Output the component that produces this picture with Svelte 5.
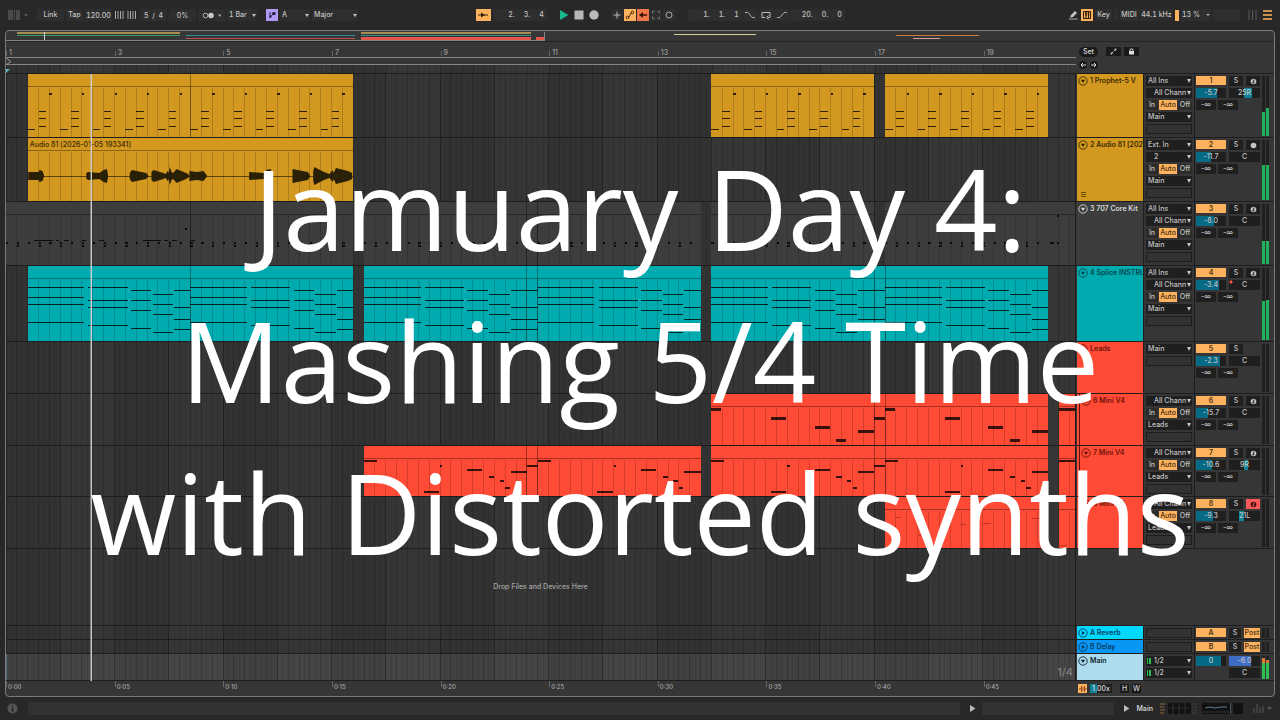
<script lang="ts">
  interface Note { x: number; w: number; y: number; h?: number }
  interface Clip { start: number; len: number; splits?: number[]; label?: string; notes: Note[] }
  interface Track {
    id: string
    name: string
    color: string
    ink: string
    height: number
    grouped?: boolean
    input?: string
    channel?: string
    monitor?: boolean
    output: string
    vol: string
    volFill: number
    pan: string
    panFrom?: number
    panTo?: number
    arm?: 'midi' | 'audio' | 'on'
    meter: number[]
    hot?: boolean
    clips: Clip[]
  }

  // Horizontal unit everywhere in the lanes: one beat
  const VIEW = 98.5
  const PER_BAR = 5

  const bands = Array.from({ length: 10 }, (_, i) => i * 10 + 5)
  const beats = Array.from({ length: 99 }, (_, i) => i)
  const bars = Array.from({ length: 10 }, (_, i) => i * 2 + 1)
  const seconds = Array.from({ length: 10 }, (_, i) => i * 5)

  function stabs(count: number): Note[] {
    const out: Note[] = []
    for (let i = 0; i < count; i++) {
      const x = i * 3
      out.push({ x, w: 0.7, y: 55, h: 1 })
      for (const y of [37, 44, 52]) out.push({ x: x + 1, w: 0.7, y, h: 1 })
      out.push({ x: x + 2, w: 0.22, y: 19, h: 2 })
    }
    return out
  }

  const chordShapes = [
    { x: 0, w: 5.2, ys: [21, 31, 38, 56] },
    { x: 5.6, w: 3.6, ys: [21, 34, 41, 59] },
    { x: 9.5, w: 1.9, ys: [24, 34, 44, 62] },
    { x: 11.5, w: 1.9, ys: [28, 38, 48, 66] },
    { x: 13.5, w: 1.5, ys: [24, 41, 53, 63] },
  ]
  function chords(offset: number, tail = 1.5): Note[] {
    return chordShapes.flatMap((c) =>
      c.ys.map((y) => ({ x: c.x + offset, w: c.x === 13.5 ? tail : c.w, y, h: 1 })),
    )
  }

  const shift = (notes: Note[], by: number) => notes.map((n) => ({ ...n, x: n.x + by }))

  const bass: Note[] = [
    { x: 0, w: 0.9, y: 14, h: 3 },
    { x: 5.5, w: 1.4, y: 23, h: 3 },
    { x: 9.5, w: 1.4, y: 32, h: 3 },
    { x: 11.5, w: 0.9, y: 45, h: 3 },
    { x: 13.5, w: 1.5, y: 36, h: 3 },
  ]
  const lead: Note[] = [
    { x: 0, w: 1.2, y: 14 },
    { x: 5.5, w: 1.4, y: 45 },
    { x: 7, w: 0.2, y: 19 },
    { x: 9.5, w: 1.4, y: 23 },
    { x: 11.5, w: 0.5, y: 30 },
    { x: 12.5, w: 0.4, y: 34 },
    { x: 13, w: 0.4, y: 41 },
    { x: 13.5, w: 1.5, y: 25 },
  ]
  const fuzz: Note[] = [
    { x: 1, w: 0.5, y: 20, h: 1 }, { x: 3, w: 0.4, y: 38, h: 1 }, { x: 6.9, w: 0.6, y: 27, h: 1 },
    { x: 9, w: 0.8, y: 26, h: 1 }, { x: 11.5, w: 0.3, y: 36, h: 1 }, { x: 13.5, w: 0.7, y: 21, h: 1 },
  ]

  function drums(count: number, busy = false): Note[] {
    const out: Note[] = []
    for (let i = 0; i < count; i++) {
      out.push({ x: i, w: 0.2, y: 40, h: 2 })
      if (i % 2 === 1) out.push({ x: i, w: 0.2, y: 43, h: 2 })
    }
    if (busy) {
      for (const s of [0, 10]) {
        out.push({ x: s + 0.6, w: 1.7, y: 38, h: 1 }, { x: s + 2.6, w: 0.3, y: 38, h: 1 })
        out.push({ x: s + 3.3, w: 0.5, y: 38, h: 1 }, { x: s + 5, w: 0.4, y: 38, h: 1 })
      }
      out.push({ x: 6.6, w: 0.4, y: 38, h: 1 }, { x: 14.5, w: 0.2, y: 26, h: 2 })
    }
    return out
  }

  const padClip = (start: number): Clip => ({
    start, len: 31, splits: [15, 16], notes: [...chords(0, 2.5), ...chords(16)],
  })
  const leadClip = (start: number): Clip => ({
    start, len: 31, splits: [15, 16], notes: [...lead, { x: 15, w: 1, y: 19 }, ...shift(lead, 16)],
  })

  const amber = '#d29820'
  const coral = '#ff4a36'
  const teal = '#00abb0'

  const tracks: Track[] = [
    { id: '1', name: '1 Prophet-5 V', color: amber, ink: '#3d2a04', height: 64, input: 'All Ins', channel: 'All Channels',
      monitor: true, output: 'Main', vol: '-5.7', volFill: 70, pan: '25R', panFrom: 50, panTo: 74, arm: 'midi', meter: [40, 46],
      clips: [
        { start: 2, len: 30, splits: [15], notes: stabs(10) },
        { start: 65, len: 15, notes: stabs(5) },
        { start: 81, len: 15, notes: stabs(5) },
      ] },
    { id: '2', name: '2 Audio 81 [2026-01-05]', color: amber, ink: '#3d2a04', height: 64, input: 'Ext. In', channel: '2',
      monitor: true, output: 'Main', vol: '-11.7', volFill: 50, pan: 'C', arm: 'audio', meter: [58, 58],
      clips: [{ start: 2, len: 30, label: 'Audio 81 [2026-01-05 193341]', notes: [] }] },
    { id: '3', name: '3 707 Core Kit', color: '#3d3d3d', ink: '#d8d8d8', height: 64, input: 'All Ins', channel: 'All Channels',
      monitor: true, output: 'Main', vol: '-8.0', volFill: 60, pan: 'C', arm: 'midi', meter: [38, 38],
      clips: [
        { start: 0, len: 2, notes: drums(2) },
        { start: 2, len: 30, splits: [15], notes: drums(30, true) },
        { start: 33, len: 31, splits: [15, 16], notes: drums(31) },
        { start: 65, len: 15, notes: drums(15) },
        { start: 81, len: 15, notes: drums(15) },
        { start: 96, len: 3, notes: [{ x: 0.8, w: 0.2, y: 13, h: 2 }, { x: 0.2, w: 0.4, y: 40, h: 2 }, { x: 0.8, w: 0.2, y: 40, h: 2 }] },
      ] },
    { id: '4', name: '4 Splice INSTRUMENT', color: teal, ink: '#02474a', height: 76, input: 'All Ins', channel: 'All Channels',
      monitor: true, output: 'Main', vol: '-3.4', volFill: 76, pan: 'C', arm: 'midi', meter: [54, 56], hot: true,
      clips: [
        { start: 2, len: 30, splits: [15], notes: [...chords(0), ...chords(15)] },
        padClip(33),
        padClip(65),
      ] },
    { id: '5', name: 'Leads', color: coral, ink: '#6e130a', height: 52, output: 'Main', vol: '-2.3', volFill: 79, pan: 'C',
      meter: [0, 0], clips: [] },
    { id: '6', name: '6 Mini V4', color: coral, ink: '#6e130a', height: 52, grouped: true, channel: 'All Channels', monitor: true,
      output: 'Leads', vol: '-15.7', volFill: 40, pan: 'C', arm: 'midi', meter: [0, 0],
      clips: [
        { start: 65, len: 31, splits: [15, 16], notes: [...bass, { x: 15, w: 1, y: 23, h: 3 }, ...shift(bass, 16)] },
        { start: 97, len: 2, notes: [{ x: 0, w: 1.5, y: 14, h: 3 }] },
      ] },
    { id: '7', name: '7 Mini V4', color: coral, ink: '#6e130a', height: 51, grouped: true, channel: 'All Channels', monitor: true,
      output: 'Leads', vol: '-10.6', volFill: 53, pan: '9R', panFrom: 50, panTo: 60, arm: 'midi', meter: [0, 0],
      clips: [leadClip(33), leadClip(65), { start: 97, len: 2, notes: [{ x: 0, w: 1.5, y: 14 }] }] },
    { id: '8', name: '8 Mini V4', color: coral, ink: '#6e130a', height: 52, grouped: true, channel: 'All Channels', monitor: true,
      output: 'Leads', vol: '-9.3', volFill: 57, pan: '21L', panFrom: 32, panTo: 50, arm: 'on', meter: [0, 0],
      clips: [
        { start: 81, len: 15, notes: fuzz },
        { start: 97, len: 2, notes: [{ x: 0, w: 0.8, y: 48, h: 1 }] },
      ] },
  ]

  const returns = [
    { id: 'A', name: 'A Reverb', color: '#00d8ff' },
    { id: 'B', name: 'B Delay', color: '#0a96f5' },
  ]

  // Waveform bursts: [beat, half height in px]
  const bursts = [
    [[2.05, 4], [3, 4], [3.1, 6], [3.35, 5], [3.5, 1]],
    [[7.4, 3], [7.6, 4], [8.6, 3], [9, 6], [9.3, 7], [9.4, 1]],
    [[11.4, 3], [11.6, 6], [12.9, 3], [13.1, 1]],
    [[13.4, 4], [13.6, 6], [14.5, 3], [14.7, 2], [14.9, 5], [15, 3], [15.1, 9], [15.3, 3], [15.5, 4], [15.7, 7], [16.6, 3], [16.9, 1]],
    [[16.9, 5], [17.6, 4], [18.2, 5], [18.4, 2], [18.5, 1]],
    [[22.4, 4], [23.7, 3], [24, 6], [24.4, 7], [24.5, 1]],
    [[26.4, 7], [27.8, 4], [28, 1]],
    [[28.3, 4], [28.4, 9], [29.3, 4], [29.8, 2], [30.1, 6], [30.2, 3], [30.4, 8], [31.5, 5], [31.9, 3]],
  ]
  function burstPath(b: number[][]) {
    const top = b.map(([x, a]) => `${x} ${38 - a}`)
    const bottom = [...b].reverse().map(([x, a]) => `${x} ${38 + a}`)
    return `M${[...top, ...bottom].join('L')}Z`
  }

  const overview = [
    { x: 11, w: 163, y: 1, h: 2, c: '#a38d4f' }, { x: 11, w: 163, y: 4, h: 1, c: '#3e9a6a' },
    { x: 180, w: 169, y: 4, h: 1, c: '#2f8f92' }, { x: 180, w: 169, y: 7, h: 1, c: '#c24f45' },
    { x: 355, w: 170, y: 1, h: 2, c: '#a38d4f' }, { x: 355, w: 170, y: 4, h: 1, c: '#2f8f92' },
    { x: 355, w: 170, y: 6, h: 3, c: '#e2574a' }, { x: 530, w: 9, y: 6, h: 3, c: '#e2574a' },
    { x: 668, w: 82, y: 3, h: 1, c: '#d8cf98' },
    { x: 890, w: 83, y: 4, h: 1, c: '#c87d3c' }, { x: 907, w: 27, y: 7, h: 1, c: '#d6a197' },
  ]

  let playing = $state(true)
  let muted = $state<Record<string, boolean>>({})
</script>

{#snippet lane(height: number, clips: Clip[], color: string, wave: boolean)}
  <svg class="lane" viewBox="0 0 {VIEW} {height}" preserveAspectRatio="none" shape-rendering="crispEdges" aria-hidden="true">
    {#each bands as b}
      <rect x={b} y="0" width={PER_BAR} {height} fill="#fff" opacity=".022" />
    {/each}
    {#each beats as b}
      <line class="beat" class:bar={b % PER_BAR === 0} x1={b} x2={b} y1="0" y2={height} />
      <line class="half" x1={b + 0.5} x2={b + 0.5} y1="0" y2={height} />
    {/each}
    {#each clips as clip}
      <rect x={clip.start} y="0" width={clip.len} {height} fill={color} />
      {#each beats.slice(1, clip.len) as b}
        <line class="clip-beat" x1={clip.start + b} x2={clip.start + b} y1="14" y2={height} />
      {/each}
      <line class="clip-head" x1={clip.start} x2={clip.start + clip.len} y1="12" y2="12" />
      {#each clip.splits ?? [] as s}
        <line class="clip-head" x1={clip.start + s} x2={clip.start + s} y1="0" y2={height} />
      {/each}
      {#each clip.notes as n}
        <rect x={clip.start + n.x} y={n.y} width={n.w} height={n.h ?? 2} fill="#000" opacity={n.h === 1 && color === coral ? 0.25 : 0.78} />
      {/each}
    {/each}
    {#if wave}
      <line class="wave-axis" x1="2" x2="32" y1="38" y2="38" />
      {#each bursts as b}
        <path d={burstPath(b)} fill="#2a2008" shape-rendering="auto" />
      {/each}
    {/if}
  </svg>
{/snippet}

{#snippet fold(open: boolean)}
  <svg class="fold" viewBox="0 0 10 10" aria-hidden="true">
    <circle cx="5" cy="5" r="4.2" fill="none" stroke="currentColor" stroke-width=".9" />
    <path d={open ? 'M2.8 3.8h4.4L5 7Z' : 'M3.8 2.8v4.4L7 5Z'} fill="currentColor" />
  </svg>
{/snippet}

{#snippet pick(label: string, value: string, indent: boolean)}
  <span class="pick">
    <select aria-label={label} class:indent><option>{value}</option></select>
  </span>
{/snippet}

<div class="app">
  <header class="transport">
    <div class="group">
      <button type="button" class="ghost" aria-label="Browser">
        <svg width="20" height="10" viewBox="0 0 20 10"><path d="M0 0h5v10H0zM6 0h1v10H6zM8 0h4v10H8z" fill="#4a4a4a" /><path d="M16 4h4l-2 3z" fill="#555" /></svg>
      </button>
      <button type="button" class="cell w27">Link</button>
      <button type="button" class="cell w17">Tap</button>
      <input class="cell w27" aria-label="Tempo" value="120.00" />
      <svg width="24" height="8" viewBox="0 0 24 8" aria-hidden="true"><path d="M1.500 0v8M4 0v8M6.500 0v8M9 0v8M14 0v8M16.500 0v8M19 0v8M21.500 0v8" stroke="#aaa" /></svg>
      <input class="cell w27" aria-label="Time signature" value="5  /  4" />
      <input class="cell w27" aria-label="Groove amount" value="0%" />
      <button type="button" class="cell w27" aria-label="Metronome">
        <svg width="20" height="7" viewBox="0 0 20 7"><circle cx="3.500" cy="3.500" r="2.300" fill="none" stroke="#b5b5b5" /><circle cx="9" cy="3.500" r="2.800" fill="#c8c8c8" /><path d="M16 2.500h3.500L17.750 5z" fill="#aaa" /></svg>
      </button>
      <span class="pick flat w30"><select aria-label="Quantization"><option>1 Bar</option></select></span>
      <button type="button" class="cell scale" aria-label="Scale mode">
        <svg width="10" height="10" viewBox="0 0 10 10"><path d="M3 2v5M3.500 6.500l2-1.500V3.500" stroke="#2b2350" fill="none" /><path d="M5.500 2h3v3h-3z" fill="#2b2350" /><circle cx="3.300" cy="6.800" r="1.200" fill="#2b2350" /></svg>
      </button>
      <span class="pick flat w30"><select aria-label="Root note"><option>A</option></select></span>
      <span class="pick flat w46"><select aria-label="Scale name"><option>Major</option></select></span>
    </div>

    <div class="group">
      <button type="button" class="cell lit follow" aria-label="Follow">
        <svg width="12" height="8" viewBox="0 0 12 8"><path d="M1 4h10" stroke="#33210a" /><path d="M4 1.500 8 4 4 6.500Z" fill="#33210a" /></svg>
      </button>
      <output class="cell pos"><span>2.</span><span>3.</span><span>4</span></output>
      <div class="play-set">
        <button type="button" class="ghost" aria-label="Play" onclick={() => (playing = !playing)}>
          <svg width="10" height="12" viewBox="0 0 10 12"><path d="M1 1v10l8.500-5z" fill={playing ? '#17b88c' : '#b5b5b5'} /></svg>
        </button>
        <button type="button" class="ghost" aria-label="Stop" onclick={() => (playing = false)}>
          <svg width="10" height="10" viewBox="0 0 10 10"><path d="M.5.5h9v9h-9z" fill="#b8b8b8" /></svg>
        </button>
        <button type="button" class="ghost" aria-label="Record">
          <svg width="10" height="10" viewBox="0 0 10 10"><circle cx="5" cy="5" r="4.700" fill="#bcbcbc" /></svg>
        </button>
      </div>
      <div class="tight">
        <button type="button" class="cell w12" aria-label="Overdub"><svg width="8" height="8" viewBox="0 0 8 8"><path d="M4 .5v7M.5 4h7" stroke="#bbb" /></svg></button>
        <button type="button" class="cell lit w12" aria-label="Automation arm"><svg width="10" height="10" viewBox="0 0 10 10"><path d="M3 7q2 0 2-2t2-2" stroke="#4a2c08" fill="none" /><g fill="none" stroke="#4a2c08"><circle cx="2.500" cy="7.500" r="1.300" /><circle cx="7.500" cy="2.500" r="1.300" /></g></svg></button>
        <button type="button" class="cell hot w12" aria-label="Re-enable automation"><svg width="10" height="8" viewBox="0 0 10 8"><path d="M4 4h5" stroke="#3b1306" stroke-width="1.500" /><path d="M5 1 1 4l4 3z" fill="#3b1306" /></svg></button>
        <button type="button" class="cell w12" aria-label="Capture"><svg width="8" height="8" viewBox="0 0 8 8"><path d="M.5 2.500v-2h2M5.500.5h2v2M7.500 5.500v2h-2M2.500 7.500h-2v-2" stroke="#777" fill="none" /></svg></button>
        <button type="button" class="cell w12" aria-label="Session record"><svg width="8" height="8" viewBox="0 0 8 8"><circle cx="4" cy="4" r="3" stroke="#aaa" fill="none" /></svg></button>
      </div>
      <div class="tight loop">
        <output class="cell pos"><span>1.</span><span>1.</span><span>1</span></output>
        <button type="button" class="cell w15" aria-label="Punch in"><svg width="10" height="8" viewBox="0 0 10 8"><path d="M0 1.500h3l4 5h3" stroke="#aaa" fill="none" /></svg></button>
        <button type="button" class="cell w15" aria-label="Loop"><svg width="10" height="9" viewBox="0 0 10 9"><path d="M4 6.500H1v-5h8v5H7M7.500 4.500 5.500 6.500l2 2" stroke="#bbb" fill="none" /></svg></button>
        <button type="button" class="cell w15" aria-label="Punch out"><svg width="10" height="8" viewBox="0 0 10 8"><path d="M0 6.500h3l4-5h3" stroke="#aaa" fill="none" /></svg></button>
        <output class="cell pos"><span>20.</span><span>0.</span><span>0</span></output>
      </div>
    </div>

    <div class="group right">
      <button type="button" class="ghost" aria-label="Draw mode"><svg width="9" height="10" viewBox="0 0 9 10"><path d="M1 7.500 2 5l4-4 2 2-4 4z" fill="#c4c4c4" /><path d="M0 9h8.500" stroke="#aaa" /></svg></button>
      <button type="button" class="cell lit w12" aria-label="Computer MIDI keyboard"><svg width="10" height="10" viewBox="0 0 10 10"><path d="M1.500 1.500h7v7h-7zM4 1.500v7M6.500 1.500v7" stroke="#2c1c06" fill="none" /><path d="M3.300 1.500h1.400v4H3.300zM5.800 1.500h1.400v4H5.800z" fill="#2c1c06" /></svg></button>
      <button type="button" class="cell w17">Key</button>
      <span class="cell w4"></span>
      <button type="button" class="cell w18">MIDI</button>
      <span class="cell w34">44.1 kHz</span>
      <span class="cpu"></span>
      <span class="cell w30 load">13 % <i></i></span>
      <span class="cell w27"></span>
      <svg class="views" width="24" height="10" viewBox="0 0 24 10" aria-hidden="true"><path d="M1 0v10M4.500 0v10M8 0v10" stroke="#5a5a5a" /><path d="M15 1h9M15 5h9M15 9h9" stroke="#ffb45c" stroke-width="1.500" /></svg>
    </div>
  </header>

  <main class="frame">
    <div class="overview">
      <svg viewBox="0 0 1268 10" preserveAspectRatio="none" shape-rendering="crispEdges" aria-hidden="true">
        {#each overview as o}
          <rect x={o.x} y={o.y} width={o.w} height={o.h} fill={o.c} />
        {/each}
        <rect x="38" y="1" width="1" height="8" fill="#ccc" />
        <path d="M0 9.500h538.500V1" fill="none" stroke="#858585" />
      </svg>
    </div>

    <div class="split head">
      <div class="ruler">
        <div class="marks">
          {#each bars as n}
            <span style="left: {(((n - 1) * PER_BAR) / VIEW) * 100}%">{n}</span>
          {/each}
        </div>
        <div class="strip">
          <svg width="6" height="7" viewBox="0 0 6 7" aria-hidden="true"><path d="M.5.5 5 3.500.5 6.500" stroke="#999" fill="none" /></svg>
        </div>
        <div class="subgrid">
          {@render lane(9, [], '', false)}
          <svg class="cue" width="4" height="4" viewBox="0 0 4 4" aria-hidden="true"><path d="M0 0h4L0 4z" fill="#5fb4c9" /></svg>
        </div>
      </div>
      <div class="locators">
        <div>
          <button type="button" class="pill">Set</button>
          <button type="button" class="dark" aria-label="Automation mode"><svg width="7" height="7" viewBox="0 0 7 7"><path d="M1.500 5.500l4-4" stroke="#ccc" stroke-dasharray="2 1" /><circle cx="1.500" cy="5.500" r="1" fill="#ccc" /><circle cx="5.500" cy="1.500" r="1" fill="#ccc" /></svg></button>
          <button type="button" class="dark" aria-label="Lock envelopes"><svg width="7" height="7" viewBox="0 0 7 7"><path d="M1 3h5v3.500H1z" fill="#ddd" /><path d="M2 3V1.500q1.500-1.500 3 0V3" stroke="#ddd" fill="none" /></svg></button>
        </div>
        <div class="arrows">
          <button type="button" aria-label="Previous locator"><svg width="6" height="6" viewBox="0 0 6 6"><path d="M1 3h5M3 1 1 3l2 2" stroke="#ddd" fill="none" /></svg></button>
          <button type="button" aria-label="Next locator"><svg width="6" height="6" viewBox="0 0 6 6"><path d="M0 3h5M3 1l2 2-2 2" stroke="#ddd" fill="none" /></svg></button>
        </div>
      </div>
    </div>

    <div class="tracks">
      {#each tracks as t (t.id)}
        <section class="split track" aria-label={t.name} style="height: {t.height}px">
          <div class="lane-box">
            {@render lane(t.height - 1, t.clips, t.color, t.id === '2')}
            {#each t.clips.filter((c) => c.label) as c}
              <span class="clip-name" style="left: {(c.start / VIEW) * 100}%">{c.label}</span>
            {/each}
          </div>
          <div class="panel">
            <div class="title" class:grouped={t.grouped} style="background: {t.color}; color: {t.ink}">
              {@render fold(true)}<span>{t.name}</span>
              {#if t.arm === 'audio'}
                <svg class="lanes-icon" width="5" height="5" viewBox="0 0 5 5" aria-hidden="true"><path d="M0 .5h5M0 2.500h5M0 4.500h5" stroke="#6b4a08" /></svg>
              {/if}
            </div>
            <div class="io">
              {#if t.input}{@render pick('Input type', t.input, false)}{/if}
              {#if t.channel}{@render pick('Input channel', t.channel, true)}{/if}
              {#if t.monitor}
                <div class="monitor">
                  <button type="button">In</button><button type="button" class="lit">Auto</button><button type="button">Off</button>
                </div>
              {/if}
              {@render pick('Output type', t.output, false)}
              <span class="blank"></span>
            </div>
            <div class="mix">
              <button type="button" class="lit act" class:off={muted[t.id]} onclick={() => (muted[t.id] = !muted[t.id])}>{t.id}</button>
              <button type="button" class="small" aria-label="Solo">S</button>
              {#if t.arm}
                <button type="button" class="small" class:armed={t.arm === 'on'} aria-label="Arm">
                  <svg width="7" height="7" viewBox="0 0 7 7"><circle cx="3.500" cy="3.500" r="2.800" fill={t.arm === 'on' ? '#3a0d0d' : '#c4c4c4'} />{#if t.arm !== 'audio'}<path d="M3.800 1.500v3" stroke={t.arm === 'on' ? '#ff5a5a' : '#222'} /><circle cx="3.200" cy="4.600" r=".9" fill={t.arm === 'on' ? '#ff5a5a' : '#222'} />{/if}</svg>
                </button>
              {/if}
              <input class="vol" aria-label="Volume" value={t.vol} style="--to: {t.volFill}%" />
              <input class="pan" class:hot={t.hot} aria-label="Pan" value={t.pan} style="--from: {t.panFrom ?? 0}%; --to: {t.panTo ?? 0}%" />
              <div class="sends"><span>-∞</span><span>-∞</span></div>
            </div>
            <div class="meter">
              {#each t.meter as m}<i style="--level: {m}%"></i>{/each}
            </div>
          </div>
        </section>
      {/each}

      <div class="split drop">
        <div class="lane-box">
          {@render lane(77, [], '', false)}
          <p>Drop Files and Devices Here</p>
        </div>
        <div class="panel"></div>
      </div>

      {#each returns as r (r.id)}
        <section class="split return" aria-label={r.name}>
          <div class="lane-box">{@render lane(13, [], '', false)}</div>
          <div class="panel">
            <div class="title" style="background: {r.color}; color: #043a5c">{@render fold(false)}<span>{r.name}</span></div>
            <div class="io"><span class="blank"></span></div>
            <div class="mix">
              <button type="button" class="lit act">{r.id}</button>
              <button type="button" class="small">S</button>
              <button type="button" class="lit">Post</button>
            </div>
            <div class="meter"><i style="--level: 0%"></i><i style="--level: 0%"></i></div>
          </div>
        </section>
      {/each}

      <section class="split main" aria-label="Main">
        <div class="lane-box">
          {@render lane(26, [], '', false)}
          <span class="grid-size">1/4</span>
        </div>
        <div class="panel">
          <div class="title" style="background: #acdcee; color: #10242c">{@render fold(true)}<span>Main</span></div>
          <div class="io outs">
            {@render pick('Cue out', '1/2', true)}
            {@render pick('Main out', '1/2', true)}
          </div>
          <div class="mix">
            <input class="vol" aria-label="Cue volume" value="0" style="--to: 82%" />
            <input class="pan blue" aria-label="Main volume" value="-6.0" style="--from: 0%; --to: 70%" />
            <span></span>
            <input class="pan second" aria-label="Main pan" value="C" style="--from: 0%; --to: 0%" />
          </div>
          <div class="meter peak"><i style="--level: 90%"></i><i style="--level: 82%"></i></div>
        </div>
      </section>

      <div class="playhead"></div>
    </div>

    <div class="split foot">
      <div class="times">
        {#each seconds as s}
          <span style="left: {((s * 2) / VIEW) * 100}%">0:{String(s).padStart(2, '0')}</span>
        {/each}
      </div>
      <div class="zoomers">
        <button type="button" class="lit w9" aria-label="Optimize height"><svg width="8" height="8" viewBox="0 0 8 8"><path d="M1 3v2M2.500 1v6M4 2v4M5.500 1v6M7 3v2" stroke="#7a3018" stroke-width=".8" /></svg></button>
        <input aria-label="Waveform zoom" value="1.00x" />
        <button type="button" class="dark w9">H</button>
        <button type="button" class="dark w9">W</button>
      </div>
    </div>
  </main>

  <footer class="status">
    <svg width="11" height="11" viewBox="0 0 11 11" aria-hidden="true"><circle cx="5.500" cy="5.500" r="5" fill="#555" /><path d="M5.500 2v1.500M5.500 4.500V9" stroke="#262626" stroke-width="1.500" /></svg>
    <div class="bar grow"></div>
    <svg width="6" height="7" viewBox="0 0 6 7" aria-hidden="true"><path d="M0 0v7l5.500-3.500z" fill="#bbb" /></svg>
    <div class="bar clip-slot"></div>
    <svg width="6" height="7" viewBox="0 0 6 7" aria-hidden="true"><path d="M0 0v7l5.500-3.500z" fill="#bbb" /></svg>
    <span class="chain">Main</span>
    <svg width="86" height="13" viewBox="0 0 86 13" aria-hidden="true">
      <path d="M9 1h23v11H9zM43 1h28v11H43zM74 1h10v11H74z" fill="#111" />
      <path d="M1 2h5M1 5h4M1 8h5M1 11h4" stroke="#8a6a3c" /><path d="M14 1v11M20 1v11M26 1v11" stroke="#333" />
      <path d="M10 6h20" stroke="#2b2b2b" /><path d="M34 1v11M37 1v11" stroke="#444" stroke-dasharray="2 1" />
      <path d="M46 6l5-1 5 1 6-1 6 0" stroke="#567f8c" fill="none" /><path d="M44 10h26" stroke="#444" stroke-dasharray="2 1" /><path d="M71.500 1v11" stroke="#3b5664" />
    </svg>
    <svg class="tail" width="20" height="9" viewBox="0 0 20 9" aria-hidden="true"><path d="M1 4v5M4 0v9M7 3v6M10 2v7" stroke="#555" /><path d="M14 3h5l-2.500 3z" fill="#555" /></svg>
  </footer>

  <h1 class="caption">Jamuary Day 4:<br />Mashing 5/4 Time<br />with Distorted synths</h1>
</div>

<style>
  :global(body) { background: #282828; }

  .app {
    --line: #1d1d1d;
    --panel: #363636;
    --dark: #1f1f1f;
    --lit: #ffb25e;
    --text: #c4c4c4;
    position: relative;
    display: flex;
    flex-direction: column;
    min-height: 100vh;
    background: #282828;
    color: var(--text);
    font-family: Inter, 'Liberation Sans', sans-serif;
    font-size: 7px;
    font-weight: 500;
    line-height: 10px;
    overflow: hidden;
  }
  .app * { box-sizing: border-box; }
  button, input, select {
    margin: 0;
    padding: 0;
    border: 0;
    border-radius: 0;
    color: inherit;
    font: inherit;
    font-variant-numeric: inherit;
    background: none;
  }
  button { display: flex; align-items: center; justify-content: center; cursor: pointer; }
  input { min-width: 0; text-align: center; white-space: pre; }
  svg { display: block; flex-shrink: 0; }
  .lit { background: var(--lit); color: #4a3010; }
  .dark { background: #1a1a1a; color: #ccc; }

  /* ── Transport ── */
  .transport {
    display: grid;
    grid-template-columns: 37% 1fr auto;
    height: 30px;
    padding: 0 8px;
    align-items: center;
    font-variant-numeric: tabular-nums;
  }
  .group { display: flex; align-items: center; gap: 2px; }
  .group > .ghost:first-child { margin-right: 7px; }
  .right > .ghost:first-child { margin-right: 1px; }
  .tight, .play-set { display: flex; align-items: center; gap: 1px; }
  .play-set { gap: 5px; margin: 0 10px; }
  .loop { margin-left: 11px; }
  .cell {
    display: flex;
    align-items: center;
    justify-content: center;
    height: 12px;
    background: #2e2e2e;
    white-space: nowrap;
  }
  .cell.lit { background: var(--lit); }
  .cell.hot { background: #f0764a; }
  .w4 { width: 4px; } .w9 { width: 9px; } .w12 { width: 12px; } .w15 { width: 15px; }
  .w17 { width: 17px; } .w18 { width: 18px; } .w27 { width: 27px; } .w30 { width: 30px; }
  .w34 { width: 33px; } .w46 { width: 46px; }
  .scale { width: 12px; margin-left: 7px; background: #b09af5; }
  .follow { width: 15px; }
  .pos { width: 54px; justify-content: flex-end; gap: 9px; padding-right: 3px; }
  .cpu { width: 4px; height: 11px; background: var(--lit); }
  .load { justify-content: space-between; padding: 0 1px; }
  .load i { border: 2px solid transparent; border-top-color: #aaa; border-bottom: 0; }
  .views { margin-left: 6px; }

  /* ── Drop-downs ── */
  .pick { position: relative; display: block; height: 10px; background: var(--dark); }
  .pick select {
    appearance: none;
    display: block;
    width: 100%;
    height: 10px;
    padding: 0 6px 0 2px;
    line-height: 10px;
    overflow: hidden;
    white-space: nowrap;
  }
  .pick select.indent { padding-left: 8px; }
  .pick::after {
    content: '';
    position: absolute;
    top: 3px;
    right: 1px;
    border: 2px solid transparent;
    border-top: 4px solid #c4c4c4;
    border-bottom: 0;
    pointer-events: none;
  }
  .pick.flat { height: 12px; background: #2e2e2e; }
  .pick.flat select { height: 12px; }
  .pick.flat::after { top: 5px; border-top-width: 3px; }

  /* ── Frame ── */
  .frame {
    display: flex;
    flex: 1;
    flex-direction: column;
    margin: 0 5px;
    border: 1px solid #7b7b7b;
    border-radius: 4px;
    background: var(--panel);
  }
  .overview { height: 11px; border-bottom: 1px solid #242424; }
  .overview svg { width: 100%; height: 10px; }
  .split { display: grid; grid-template-columns: 1fr 198px; }
  .head { height: 32px; border-bottom: 1px solid var(--line); }

  .ruler { display: flex; flex-direction: column; color: #9a9a9a; }
  .marks { position: relative; height: 16px; border-bottom: 1px solid #858585; overflow: hidden; }
  .marks span { position: absolute; top: 6px; padding-left: 3px; }
  .marks span::before { content: ''; position: absolute; left: 0; top: 3px; height: 5px; border-left: 1px solid #666; }
  .strip { height: 7px; border-bottom: 1px solid #858585; }
  .subgrid { position: relative; height: 8px; background: #333; }
  .cue { position: absolute; left: 0; bottom: 0; }

  .locators { padding: 5px 3px 0; }
  .locators > div { display: flex; gap: 3px; }
  .pill { width: 19px; height: 10px; margin-right: 5px; border-radius: 5px; background: #1a1a1a; color: #ddd; }
  .locators .dark { width: 15px; height: 9px; }
  .locators .arrows { margin-top: 4px; }
  .arrows button { width: 8px; height: 8px; border-radius: 4px; background: #1a1a1a; }

  /* ── Lanes ── */
  .tracks { position: relative; display: flex; flex: 1; flex-direction: column; }
  .lane-box { position: relative; overflow: hidden; background: #323232; border-right: 1px solid var(--line); }
  .lane { width: 100%; height: 100%; }
  .lane line { vector-effect: non-scaling-stroke; stroke: #000; stroke-width: 1; }
  .lane .beat { stroke-opacity: .18; }
  .lane .bar { stroke-opacity: .3; }
  .lane .half { stroke-opacity: .08; }
  .lane .clip-beat { stroke-opacity: .17; }
  .lane .clip-head { stroke-opacity: .34; }
  .lane .wave-axis { stroke-opacity: .55; }
  .clip-name { position: absolute; top: 2px; padding-left: 2px; color: #3d2a04; }

  .track, .return, .main { border-bottom: 1px solid var(--line); }
  .panel { display: grid; grid-template-columns: 67px 52px 67px 7px; min-height: 0; background: var(--panel); }
  .title {
    position: relative;
    display: flex;
    align-items: flex-start;
    gap: 2px;
    margin-left: 1px;
    padding: 2px 0 0 1px;
    overflow: hidden;
    white-space: nowrap;
    font-weight: 600;
  }
  .title.grouped { box-shadow: inset 2px 0 #ff4a36, inset 3px 0 #5a140c; padding-left: 4px; }
  .lanes-icon { position: absolute; left: 4px; bottom: 4px; }
  .fold { width: 10px; height: 10px; }
  .io {
    display: flex;
    flex-direction: column;
    gap: 2px;
    padding: 2px 2px 0;
    border-left: 1px solid var(--line);
    border-right: 1px solid var(--line);
  }
  .blank { height: 10px; border: 1px solid var(--line); background: #323232; }
  .monitor { display: grid; grid-template-columns: 12px 18px 1fr; gap: 1px; height: 10px; }
  .monitor button { background: #2c2c2c; }
  .monitor .lit { background: var(--lit); }

  .mix {
    display: grid;
    grid-template-columns: 30px 14px 14px;
    grid-auto-rows: 10px;
    align-content: start;
    gap: 2px 3px;
    padding: 2px 0 0 1px;
  }
  .act { height: 9px; font-weight: 600; }
  .act.off { background: var(--dark); color: var(--text); }
  .small { background: var(--dark); }
  .small.armed { background: #ff5a5a; }
  .vol { grid-column: 1; background: linear-gradient(90deg, #056a85 var(--to), var(--dark) 0); }
  .pan {
    grid-column: 2 / 4;
    background: linear-gradient(90deg, var(--dark) var(--from), #0e8296 0 var(--to), var(--dark) 0);
  }
  .pan.blue { background: linear-gradient(90deg, #3d6cc4 var(--to), var(--dark) 0); }
  .pan.hot { background: radial-gradient(circle at 2px 2px, #ff5a3c 1px, transparent 2px), var(--dark); }
  .sends { grid-column: 1 / 4; display: flex; gap: 2px; }
  .sends span { width: 20px; background: var(--dark); text-align: center; }

  .meter { display: flex; gap: 1px; padding: 2px 0 1px; }
  .meter i { width: 3px; background: linear-gradient(0deg, #1fb25a var(--level), #202020 0); }
  .meter.peak i { background: linear-gradient(0deg, #2cbf52 70%, #e07a30 0 var(--level), #202020 0); }

  .drop { flex: 1; min-height: 60px; border-bottom: 1px solid var(--line); }
  .drop .lane { position: absolute; inset: 0; }
  .drop .lane-box { display: flex; align-items: center; justify-content: center; }
  .drop p { position: relative; margin: 0; color: #a4a4a4; }
  .return { height: 14px; }
  .return .mix { grid-template-columns: 30px 12px 16px; }
  .main { height: 27px; }
  .main .lane-box { background: #414141; box-shadow: inset 1px 0 #6aa7b5; }
  .outs .pick::before {
    content: '';
    position: absolute;
    left: 1px;
    top: 2px;
    width: 1px;
    height: 6px;
    border: solid #2cbf52;
    border-width: 0 2px 0 1px;
  }
  .second { grid-column: 2 / 4; }
  .main .mix > span { grid-column: 1; }
  .grid-size { position: absolute; right: 2px; bottom: 2px; color: #808080; font-size: 11px; line-height: 12px; }

  .playhead {
    position: absolute;
    top: 0;
    bottom: 0;
    left: calc((100% - 198px) * .079);
    width: 1px;
    background: #ccc;
    box-shadow: -1px 0 rgb(220 220 220 / .4);
  }

  /* ── Footer ── */
  .foot { height: 15px; }
  .times { position: relative; color: #a8a8a8; font-size: 6px; overflow: hidden; }
  .times span { position: absolute; top: 1px; padding-left: 2px; line-height: 9px; }
  .times span::before { content: ''; position: absolute; left: 0; top: -1px; height: 6px; border-left: 1px solid #666; }
  .zoomers { display: flex; align-items: center; gap: 3px; padding-left: 2px; }
  .zoomers button { height: 9px; }
  .zoomers input { width: 22px; height: 9px; margin-right: 5px; background: linear-gradient(90deg, #0e8296 32%, var(--dark) 0); color: #ddd; }

  .status { display: flex; align-items: center; gap: 6px; height: 23px; padding: 0 7px; }
  .bar { height: 13px; background: #323232; }
  .grow { flex: 1; margin: 0 4px; }
  .clip-slot { width: 132px; margin-right: 4px; }
  .chain { color: #ccc; font-weight: 600; }
  .tail { margin-left: 2px; }

  .caption {
    position: absolute;
    inset: 0;
    display: flex;
    align-items: center;
    justify-content: center;
    margin: 0;
    color: #fff;
    font-family: 'Open Sans', 'Noto Sans', sans-serif;
    font-size: 111px;
    font-weight: 400;
    line-height: 152px;
    text-align: center;
    white-space: nowrap;
    pointer-events: none;
  }
</style>
